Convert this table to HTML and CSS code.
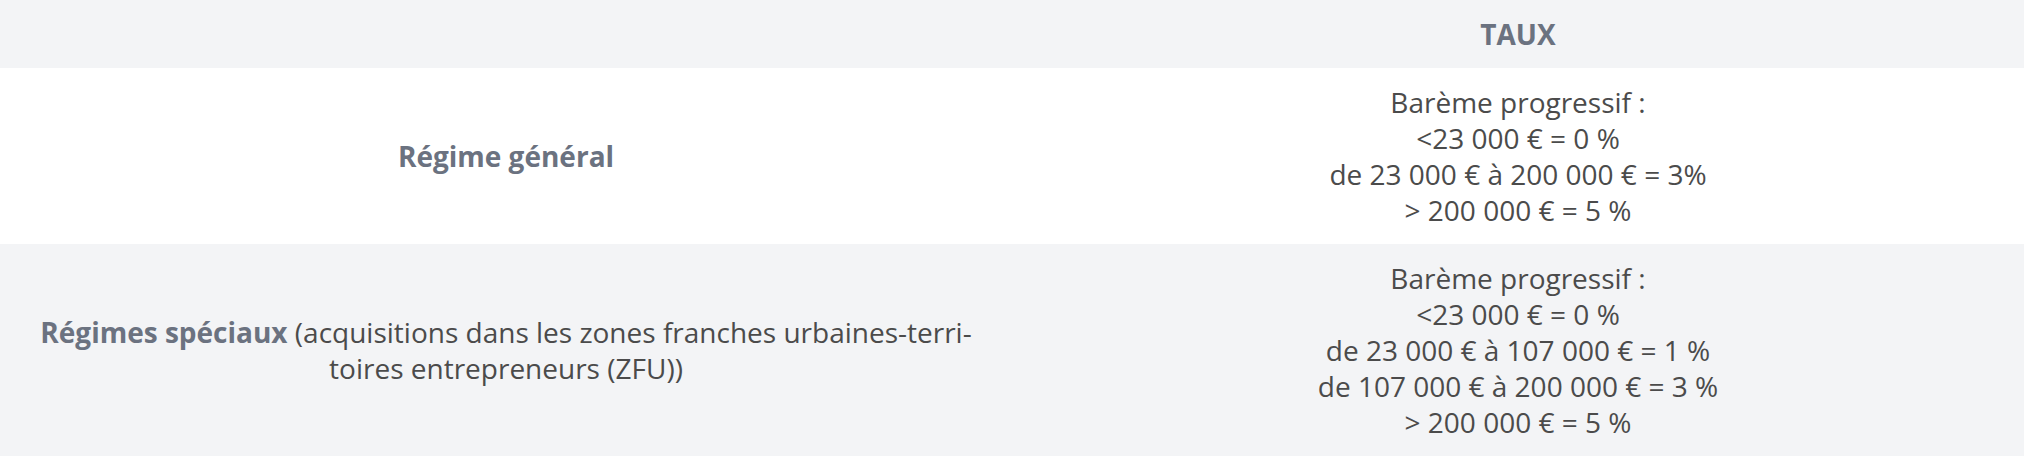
FILE: index.html
```html
<!DOCTYPE html>
<html lang="fr">
<head>
    <meta charset="UTF-8">
    <meta name="viewport" content="width=device-width, initial-scale=1.0">
    <title>Droits d'enregistrement - Taux</title>
    <link rel="stylesheet" href="styles.css">
</head>
<body>
    <table class="rate-table">
        <thead>
            <tr>
                <th></th>
                <th>TAUX</th>
            </tr>
        </thead>
        <tbody>
            <tr>
                <td><strong>Régime général</strong></td>
                <td>
                    Barème progressif :<br>
                    &lt;23 000 € = 0 %<br>
                    de 23 000 € à 200 000 € = 3%<br>
                    &gt; 200 000 € = 5 %
                </td>
            </tr>
            <tr>
                <td><strong>Régimes spéciaux</strong> (acquisitions dans les zones franches urbaines-terri&shy;toires entrepreneurs (ZFU))</td>
                <td>
                    Barème progressif :<br>
                    &lt;23 000 € = 0 %<br>
                    de 23 000 € à 107 000 € = 1 %<br>
                    de 107 000 € à 200 000 € = 3 %<br>
                    &gt; 200 000 € = 5 %
                </td>
            </tr>
        </tbody>
    </table>
</body>
</html>
```

FILE: styles.css
```css
body {
    margin: 0;
    padding: 0;
    background: #fff;
    font-family: 'Open Sans', sans-serif;
    color: #4b4b4b;
}

.rate-table {
    width: 100%;
    border-collapse: collapse;
    table-layout: fixed;
    font-size: 28px;
    line-height: 36px;
}

.rate-table th,
.rate-table td {
    padding: 16px 32px;
    text-align: center;
    vertical-align: middle;
}

.rate-table th {
    color: #6b7280;
    font-weight: 700;
}

.rate-table thead tr,
.rate-table tbody tr:nth-child(even) {
    background: #f3f4f6;
}

.rate-table strong {
    color: #6b7280;
    font-weight: 700;
}
```
